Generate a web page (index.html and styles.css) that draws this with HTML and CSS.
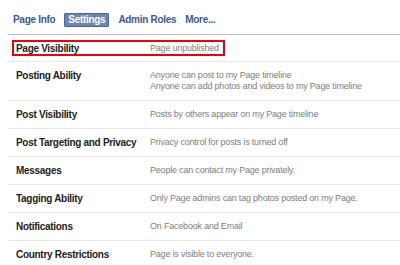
FILE: index.html
```html
<!DOCTYPE html>
<html>
<head>
<meta charset="utf-8">
<link rel="stylesheet" href="styles.css">
</head>
<body>
<div class="page">
  <div class="tabs">
    <span class="tab">Page Info</span>
    <span class="tab active">Settings</span>
    <span class="tab">Admin Roles</span>
    <span class="tab">More...</span>
  </div>
  <div class="rows">
    <div class="row first">
      <div class="hl">
        <div class="label">Page Visibility</div>
        <div class="value">Page unpublished</div>
      </div>
    </div>
    <div class="row">
      <div class="label">Posting Ability</div>
      <div class="value">Anyone can post to my Page timeline<br>Anyone can add photos and videos to my Page timeline</div>
    </div>
    <div class="row">
      <div class="label">Post Visibility</div>
      <div class="value">Posts by others appear on my Page timeline</div>
    </div>
    <div class="row">
      <div class="label">Post Targeting and Privacy</div>
      <div class="value">Privacy control for posts is turned off</div>
    </div>
    <div class="row">
      <div class="label">Messages</div>
      <div class="value">People can contact my Page privately.</div>
    </div>
    <div class="row">
      <div class="label">Tagging Ability</div>
      <div class="value">Only Page admins can tag photos posted on my Page.</div>
    </div>
    <div class="row">
      <div class="label">Notifications</div>
      <div class="value">On Facebook and Email</div>
    </div>
    <div class="row">
      <div class="label">Country Restrictions</div>
      <div class="value">Page is visible to everyone.</div>
    </div>
  </div>
</div>
</body>
</html>
```
FILE: styles.css
```css
html, body {
  margin: 0;
  padding: 0;
  background: #fff;
}
.page {
  padding-left: 8px;
  font-family: "Liberation Sans", Arial, sans-serif;
  font-size: 10px;
}
.tabs {
  display: flex;
  align-items: center;
  gap: 9px;
  padding: 13px 0 8px 5px;
  border-bottom: 1px solid #bdbdbd;
  height: 13px;
}
.tab {
  color: #3b5998;
  font-weight: bold;
  font-size: 10px;
  letter-spacing: -0.3px;
  line-height: 13px;
}
.tab.active {
  background: #6d84b4;
  color: #fff;
  border: 1px solid #4b67a1;
  padding: 0 3px;
  line-height: 12px;
  border-radius: 1px;
}
.row {
  display: flex;
  padding: 8px 0 8px 8px;
  border-bottom: 1px solid #e8e8e8;
  line-height: 11px;
}
.row.first {
  padding: 5px 0 5px 4px;
}
.hl {
  display: flex;
  border: 2px solid #e8000b;
  padding: 1px 4px 0 2px;
}
.label {
  width: 134px;
  flex: none;
  font-weight: bold;
  letter-spacing: -0.3px;
  color: #222;
}
.value {
  color: #808080;
  font-size: 9px;
  letter-spacing: -0.2px;
}
```
